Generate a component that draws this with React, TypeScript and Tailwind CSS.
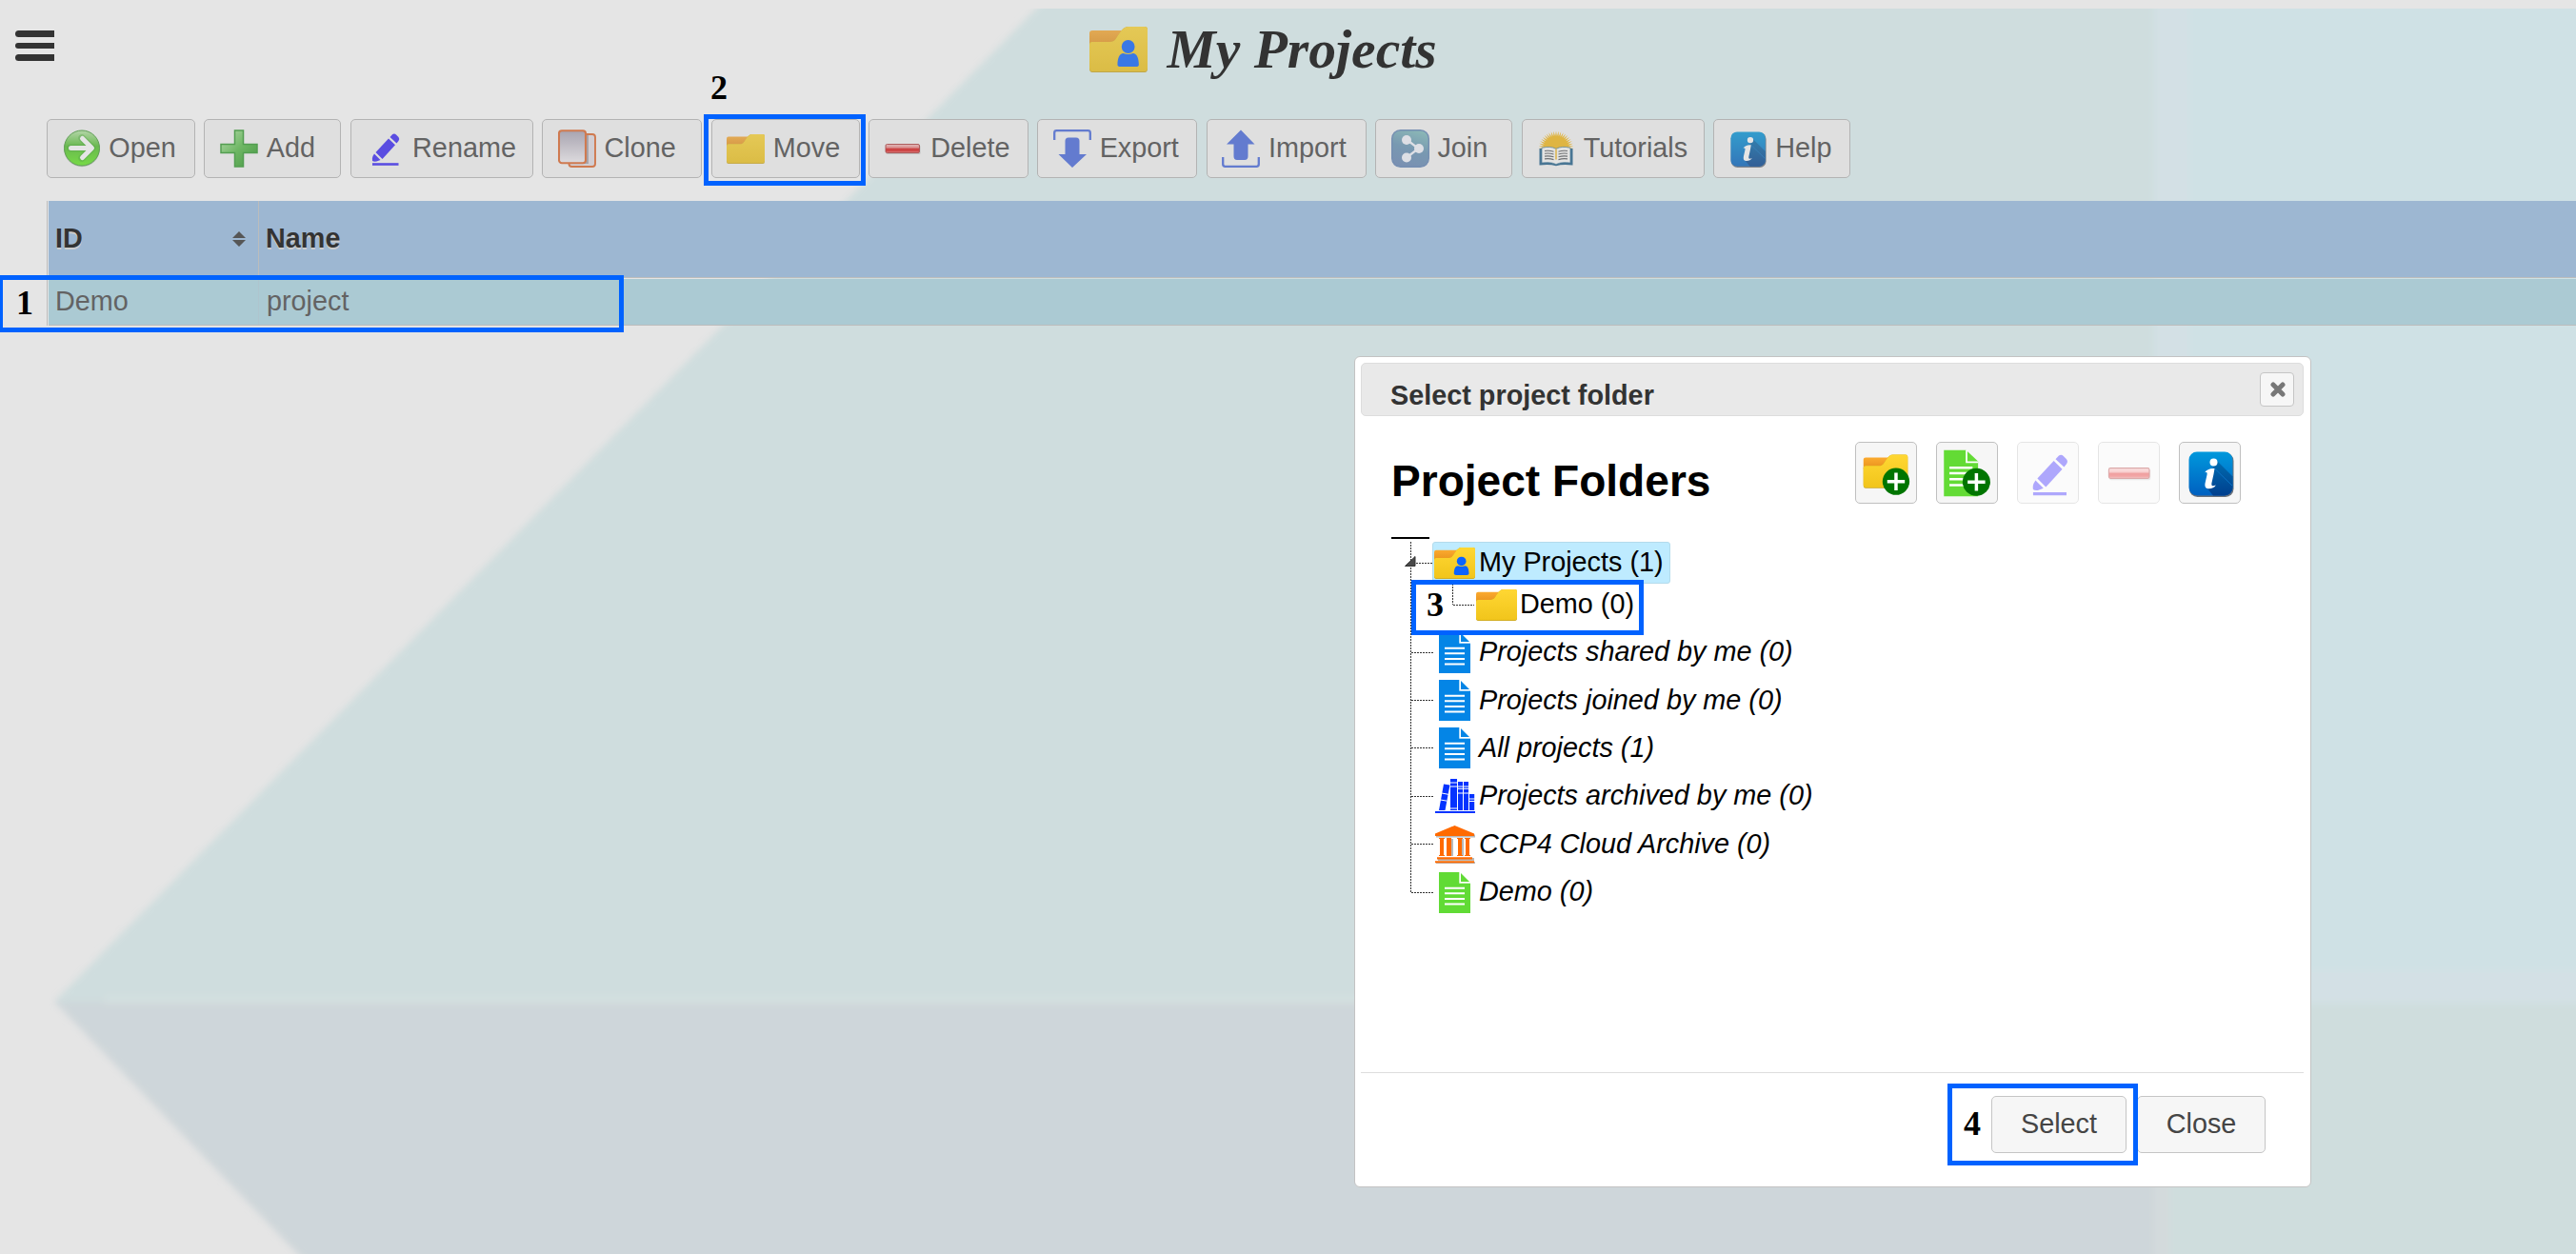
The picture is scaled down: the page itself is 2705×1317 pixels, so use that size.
import type { ReactNode } from "react";

const SANS = "font-['Liberation_Sans',Arial,sans-serif]";
const SERIF = "font-['Liberation_Serif','Times_New_Roman',serif]";

/* ---------- icons ---------- */

function FolderShape() {
  return (
    <>
      <defs>
        <linearGradient id="folderFront" x1="0" y1="0" x2="0" y2="1">
          <stop offset="0" stopColor="#ffd733" />
          <stop offset="1" stopColor="#f1c51b" />
        </linearGradient>
        <linearGradient id="folderTab" x1="0" y1="0" x2="0" y2="1">
          <stop offset="0" stopColor="#fbaa2f" />
          <stop offset="1" stopColor="#e8921c" />
        </linearGradient>
      </defs>
      <path d="M0 7a3 3 0 0 1 3-3h32v16H0z" fill="url(#folderTab)" />
      <path d="M0 19q0-3 3-3h18c6 0 7-5 10-9q4-7 9-7h17q3 0 3 3v41q0 4-3 4H3q-3 0-3-4z" fill="#c9a520" />
      <path d="M0 19q0-3 3-3h18c6 0 7-5 10-9q4-7 9-7h17q3 0 3 3v40q0 4-3 4H3q-3 0-3-4z" fill="url(#folderFront)" />
    </>
  );
}

function FolderIcon({ className }: { className: string }) {
  return (
    <svg viewBox="0 0 60 48" preserveAspectRatio="none" className={className}>
      <FolderShape />
    </svg>
  );
}

function UserFolderIcon({ className }: { className: string }) {
  return (
    <svg viewBox="0 0 60 48" preserveAspectRatio="none" className={className}>
      <FolderShape />
      <ellipse cx="40" cy="21" rx="6.8" ry="7" fill="#0b63ff" />
      <path d="M29 40c0-7 2-12 6-12q5 2 10 0c4 0 6 5 6 12q0 2-3 2H32q-3 0-3-2z" fill="#0b63ff" />
    </svg>
  );
}

function PlusBadge({ cx, cy, r }: { cx: number; cy: number; r: number }) {
  return (
    <g>
      <circle cx={cx} cy={cy} r={r} fill="#007500" />
      <path d={`M${cx - 9.5} ${cy}h19M${cx} ${cy - 9.5}v19`} stroke="#fff" strokeWidth="3.6" />
    </g>
  );
}

function NewFolderIcon() {
  return (
    <svg viewBox="0 0 65 65" className="h-[65px] w-[65px]">
      <g transform="translate(8 13) scale(.8 .755)">
        <FolderShape />
      </g>
      <PlusBadge cx={43.3} cy={42} r={14.6} />
    </svg>
  );
}

function NewListIcon() {
  return (
    <svg viewBox="0 0 65 65" className="h-[65px] w-[65px]">
      <path d="M7.5 8H31.5L44.5 20V58H7.5z" fill="#63db35" />
      <path d="M32 8v13h12.5" fill="none" stroke="#fff" strokeWidth="1.8" />
      <path d="M13.5 27h25M13.5 33h25M13.5 39.5h25M13.5 46h25" stroke="#fff" strokeWidth="2.6" />
      <PlusBadge cx={42.7} cy={42.5} r={15} />
    </svg>
  );
}

function OpenIcon() {
  return (
    <svg viewBox="0 0 40 40" className="h-10 w-10">
      <defs>
        <linearGradient id="openBall" x1="0" y1="0" x2="0" y2="1">
          <stop offset="0" stopColor="#b8e8a8" />
          <stop offset=".45" stopColor="#4fc02a" />
          <stop offset="1" stopColor="#62f01c" />
        </linearGradient>
      </defs>
      <circle cx="20" cy="20.5" r="18.8" fill="#8a9a86" opacity=".5" />
      <circle cx="20" cy="19.5" r="18.5" fill="url(#openBall)" stroke="#3f9a30" strokeWidth="1" />
      <path d="M8 19.5h22M20 9l10.5 10.5L20 30" fill="none" stroke="#2f9a22" strokeWidth="7.5" strokeLinecap="round" strokeLinejoin="round" opacity=".35" />
      <path d="M8.5 19.5H30M20.5 9.5l10 10-10 10" fill="none" stroke="#fff" strokeWidth="5" strokeLinecap="round" strokeLinejoin="round" />
    </svg>
  );
}

function AddIcon() {
  return (
    <svg viewBox="0 0 40 40" className="h-10 w-10">
      <defs>
        <linearGradient id="addPlus" x1="0" y1="0" x2="1" y2="1">
          <stop offset="0" stopColor="#bff0b0" />
          <stop offset=".5" stopColor="#55bd47" />
          <stop offset="1" stopColor="#1f8f1a" />
        </linearGradient>
      </defs>
      <path d="M15.5 1h9v14.5H39v9H24.5V39h-9V24.5H1v-9h14.5z" fill="url(#addPlus)" stroke="#2f9a2c" strokeWidth="1.5" />
    </svg>
  );
}

function PencilIcon({ className }: { className: string }) {
  return (
    <svg viewBox="0 0 40 40" className={className}>
      <g fill="#3826fa">
        <path d="M28.2 5q2.200-1 3.800.5L34.500 8q1.500 2 0 4l-2 2.500-7-6.500z" />
        <path d="M24 9.500l7 6.800L17.500 31l-7-7z" />
        <path d="M9 25.500l6.500 6.500-4 1.500q-3 .5-4.500-.5-.5-3 .5-5z" />
        <path d="M7 35.200h27.500v2.600H7z" />
      </g>
    </svg>
  );
}

function CloneIcon() {
  return (
    <svg viewBox="0 0 40 40" className="h-10 w-10">
      <defs>
        <linearGradient id="clonePage" x1="0" y1="0" x2="0" y2="1">
          <stop offset="0" stopColor="#a8a2b4" />
          <stop offset="1" stopColor="#f4f1f5" />
        </linearGradient>
      </defs>
      <rect x="11.5" y="5" width="27.5" height="34" rx="3" fill="#e4dfe6" stroke="#e0662a" strokeWidth="1.9" />
      <path d="M30 6v28H13" fill="none" stroke="#8d8892" strokeWidth="4" opacity=".7" />
      <rect x="1" y="1.2" width="28" height="34" rx="3" fill="url(#clonePage)" stroke="#e0662a" strokeWidth="2.1" />
    </svg>
  );
}

function MinusIcon({ className }: { className: string }) {
  return (
    <svg viewBox="0 0 40 40" className={className}>
      <defs>
        <linearGradient id="minusBar" x1="0" y1="0" x2="0" y2="1">
          <stop offset="0" stopColor="#f7c4c4" />
          <stop offset=".42" stopColor="#ee8080" />
          <stop offset=".5" stopColor="#d91414" />
          <stop offset=".8" stopColor="#e02020" />
          <stop offset="1" stopColor="#f08a8a" />
        </linearGradient>
      </defs>
      <rect x="2.5" y="16.5" width="36" height="9.5" rx="1.5" fill="#777" opacity=".35" />
      <rect x="2" y="15.5" width="35.5" height="9" rx="1.5" fill="url(#minusBar)" stroke="#a82a2a" strokeWidth=".9" />
    </svg>
  );
}

function ExportIcon() {
  return (
    <svg viewBox="0 0 40 40" className="h-10 w-10">
      <path d="M1.200 11V3.500q0-2.300 2.300-2.300h33q2.300 0 2.300 2.300V11" fill="none" stroke="#4568e0" strokeWidth="2.300" />
      <path d="M12.500 12q0-3.500 3.500-3.500h8q3.500 0 3.500 3.500v14H35L20 40 5.500 26h7z" fill="#4568e0" />
    </svg>
  );
}

function ImportIcon() {
  return (
    <svg viewBox="0 0 40 40" className="h-10 w-10">
      <path d="M1.200 29v7.500q0 2.300 2.300 2.300h33q2.300 0 2.300-2.300V29" fill="none" stroke="#4568e0" strokeWidth="2.300" />
      <path d="M12.500 28q0 4 3.500 4h8q3.500 0 3.500-4V15.500h7L20 .5 5 15.500h7.500z" fill="#4568e0" />
    </svg>
  );
}

function JoinIcon() {
  return (
    <svg viewBox="0 0 40 40" className="h-10 w-10">
      <defs>
        <linearGradient id="joinTile" x1=".65" y1="0" x2=".35" y2="1">
          <stop offset="0" stopColor="#7dbcbc" />
          <stop offset=".5" stopColor="#6492b5" />
          <stop offset="1" stopColor="#6686b6" />
        </linearGradient>
      </defs>
      <rect x=".7" y=".7" width="38.6" height="38.6" rx="9" fill="url(#joinTile)" stroke="#5f84b6" strokeWidth="1.4" />
      <path d="M16 10.500L28.500 20 16 29.500" fill="none" stroke="#f4f6ff" strokeWidth="2.200" />
      <circle cx="16" cy="11" r="5" fill="#f4f6ff" />
      <circle cx="29" cy="20" r="5" fill="#f4f6ff" />
      <circle cx="16" cy="29.5" r="5" fill="#f4f6ff" />
    </svg>
  );
}

const sunRays = Array.from({ length: 45 }, (_, i) => {
  const angle = Math.PI * (1 + i / 44);
  const radius = i % 2 === 0 ? 18.5 : 13;
  return `${(20 + radius * Math.cos(angle)).toFixed(2)},${(20 + radius * Math.sin(angle)).toFixed(2)}`;
}).join(" ");

function TutorialsIcon() {
  return (
    <svg viewBox="0 0 40 40" className="h-10 w-10">
      <polygon points={sunRays} fill="#f7ba18" />
      <path d="M2.500 20H5v15q9-1.500 15 1.300 6-2.800 15-1.300V20h2.500v17.500Q27 36 20 38.300 13 36 2.500 37.500z" fill="#1f5f8a" />
      <path d="M5 19.300q9-2.300 15 1 6-3.300 15-1V35q-9-1.300-15 1.500Q14 33.700 5 35z" fill="#fdfdfb" stroke="#2a6a92" strokeWidth=".7" />
      <path d="M20 20.500v11" stroke="#f0b420" strokeWidth="1.500" />
      <path
        d="M8 22.500q5-.7 9.500.7M8 25.300q5-.7 9.500.7M8 28.100q5-.7 9.500.7M8 30.900q5-.7 9.500.7M32 22.500q-5-.7-9.500.7M32 25.300q-5-.7-9.500.7M32 28.100q-5-.7-9.500.7M32 30.900q-5-.7-9.500.7"
        fill="none"
        stroke="#55585c"
        strokeWidth="1.100"
      />
    </svg>
  );
}

function InfoIcon({ className }: { className: string }) {
  return (
    <svg viewBox="0 0 48 48" className={className}>
      <defs>
        <linearGradient id="infoTile" x1="0" y1="0" x2="0" y2="1">
          <stop offset="0" stopColor="#0098dc" />
          <stop offset="1" stopColor="#0060c0" />
        </linearGradient>
        <linearGradient id="infoShade" x1="0" y1="0" x2="0" y2="1">
          <stop offset="0" stopColor="#006db0" />
          <stop offset="1" stopColor="#003f8e" />
        </linearGradient>
      </defs>
      <rect x="1" y="1.5" width="46.5" height="46.5" rx="8.5" fill="#3d4552" opacity=".75" />
      <rect x=".5" y=".5" width="46" height="46" rx="8.5" fill="url(#infoTile)" />
      <path d="M29 9l17.500 17.500V38a8.500 8.500 0 0 1-8.500 8.500H26L19 38l5-17z" fill="url(#infoShade)" />
      <path d="M27.500 18L46 36" stroke="#0b72c4" strokeWidth="1" />
      <circle cx="26.5" cy="11.5" r="4" fill="#fff" />
      <path
        d="M17 22.500c2-3.500 6-5 10.500-4.500l-1 6-2 9c-.6 3 .3 4 4.300 2.500-1.500 3-5 4-8.300 3.700-3-.4-3.500-3-2.900-6l1.900-8.500c.4-2.400-.2-3.300-2.500-2.200z"
        fill="#fff"
      />
    </svg>
  );
}

function ListIcon({ color }: { color: string }) {
  return (
    <svg viewBox="0 0 33 43" className="h-[43px] w-[33px]">
      <path d="M0 0h23l10 11v32H0z" fill={color} />
      <path d="M21.300 0H33v11.700H21.300z" fill="#fff" />
      <path d="M23 1l9 9h-9z" fill={color} />
      <path d="M6 16.800h21M6 22.200h21M6 28h21M6 33.500h21" stroke="#fff" strokeWidth="2.100" />
    </svg>
  );
}

function BooksIcon() {
  return (
    <svg viewBox="0 0 42 36" className="h-[36px] w-[42px]">
      <g fill="#0433ff">
        <path d="M0 34h42v2H0z" />
        <path d="M9 5.500l6.500 1-5 26.500H4z" />
        <path d="M16 0h7v33h-7zM24 3h5v30h-5zM30 3h5v30h-5zM36 16h5.200v17H36z" />
      </g>
      <path d="M16 4h7M16 8h7M16 31h7M24 8h11M24 10.300h11M24 15h11M36 21h6M36 23.500h6" stroke="#fff" strokeWidth="1" />
      <path d="M7 15l8 1.500M5.500 22l7 1.200" stroke="#fff" strokeWidth="1" />
    </svg>
  );
}

function BankIcon() {
  return (
    <svg viewBox="0 0 42 40" className="h-[40px] w-[42px]">
      <path d="M1 9.500h41v3H1zM15 14h4v18h-4zM27 14h3v18h-3zM3 34h38v3H3zM1 38h41v2H1z" fill="#8b8b8b" opacity=".6" />
      <path d="M20.500 0L41 8.500V11H0V8.500z" fill="#ff6a00" />
      <path d="M4 13h6v1H9v17h1v1H4v-1h1V14H4zM12 13h5v19h-5zM23 13h6v1h-1v17h1v1h-6v-1h1V14h-1zM31 13h6v1h-1v17h1v1h-6v-1h1V14h-1zM2 33.300h37v2.300H2zM0 37.200h41v2.100H0z" fill="#ff6a00" />
    </svg>
  );
}

/* ---------- page ---------- */

function Backdrop() {
  return (
    <svg viewBox="0 0 2705 1317" className="absolute inset-0 h-full w-full">
      <defs>
        <filter id="soft" x="-2%" y="-2%" width="104%" height="104%" colorInterpolationFilters="sRGB">
          <feGaussianBlur stdDeviation="3.5" />
        </filter>
        <clipPath id="belowTop">
          <path d="M0 9h2705v1308H0z" />
        </clipPath>
      </defs>
      <g clipPath="url(#belowTop)">
        <g filter="url(#soft)">
          <path d="M1107-10L57 1052H2290V-10z" fill="#e0f4f5" />
          <path d="M57 1052L330 1335H2290V1052z" fill="#dfeaef" />
          <path d="M2262-10H2740V1054H2262z" fill="#e0faff" />
          <path d="M2266 1054H2740V1340H2266z" fill="#e0f4f4" />
          <path d="M2264-10h34V1050h-34z" fill="#e6f8ff" />
          <path d="M2300 1020h440v32H2300z" fill="#e6f8ff" />
          <path d="M110 1046H2264v8H110z" fill="#e6f7f7" />
          <path d="M2262 1060h16v280h-16z" fill="#e6f0f3" />
        </g>
      </g>
    </svg>
  );
}

const tools: { label: string; width: string; icon: ReactNode }[] = [
  { label: "Open", width: "w-[156px]", icon: <OpenIcon /> },
  { label: "Add", width: "w-36", icon: <AddIcon /> },
  { label: "Rename", width: "w-48", icon: <PencilIcon className="h-10 w-10" /> },
  { label: "Clone", width: "w-[168px]", icon: <CloneIcon /> },
  { label: "Move", width: "w-[156px]", icon: <FolderIcon className="h-[31px] w-10" /> },
  { label: "Delete", width: "w-[168px]", icon: <MinusIcon className="h-10 w-10" /> },
  { label: "Export", width: "w-[168px]", icon: <ExportIcon /> },
  { label: "Import", width: "w-[168px]", icon: <ImportIcon /> },
  { label: "Join", width: "w-36", icon: <JoinIcon /> },
  { label: "Tutorials", width: "w-48", icon: <TutorialsIcon /> },
  { label: "Help", width: "w-36", icon: <InfoIcon className="mt-0.5 ml-0.5 h-[38px] w-[38px]" /> },
];

function Toolbar() {
  return (
    <nav className="ml-[49px] flex gap-[9.4px]">
      {tools.map((t) => (
        <button
          key={t.label}
          className={`flex h-[62px] shrink-0 items-center rounded-[5px] border border-[#b8b8b8] bg-[#f6f6f6] pl-[15.5px] text-[28.8px] text-[#454545] ${t.width}`}
        >
          <span className="flex h-10 w-10 shrink-0 items-center justify-center">{t.icon}</span>
          <span className="-mt-0.5 ml-[8.8px] leading-8">{t.label}</span>
        </button>
      ))}
    </nav>
  );
}

function ProjectTable() {
  return (
    <section className="mt-6 ml-[49px] border-l border-[#c5c5c5] pl-px text-[28.8px]">
      <div className="flex h-[81px] border-b border-[#c5c5c5] bg-[#99bde4] font-bold text-black [text-shadow:0_2px_0_#dcdcdc]">
        <div className="flex w-[221px] items-center justify-between border-r border-[#c5c5c5] pr-[13px] pl-[7px]">
          <span>ID</span>
          <svg viewBox="0 0 14 16" className="h-4 w-3.5">
            <path d="M7 0l7 7H0zM7 16l7-7H0z" fill="#333" />
          </svg>
        </div>
        <div className="flex items-center pl-[7px]">Name</div>
      </div>
      <div className="mt-px flex h-[49px] border-b border-[#c5c5c5] bg-[#add8e6] text-[#454545]">
        <div className="flex w-[221px] items-center border-r border-[#b0d2de] pl-[7px]">Demo</div>
        <div className="flex items-center pl-2">project</div>
      </div>
    </section>
  );
}

/* ---------- dialog ---------- */

const DOTS_H = "bg-[repeating-linear-gradient(to_right,#333_0_2px,transparent_2px_3px)]";
const DOTS_V = "bg-[repeating-linear-gradient(to_bottom,#333_0_2px,transparent_2px_3px)]";

const BLUE = "#0485e6";

const sharedLists: { label: string; icon: ReactNode }[] = [
  { label: "Projects shared by me (0)", icon: <ListIcon color={BLUE} /> },
  { label: "Projects joined by me (0)", icon: <ListIcon color={BLUE} /> },
  { label: "All projects (1)", icon: <ListIcon color={BLUE} /> },
  { label: "Projects archived by me (0)", icon: <BooksIcon /> },
  { label: "CCP4 Cloud Archive (0)", icon: <BankIcon /> },
  { label: "Demo (0)", icon: <ListIcon color="#61db35" /> },
];

function FolderTree() {
  return (
    <div className="relative mt-[35px] ml-8 text-[28.8px] leading-8 text-black">
      <div className="h-0.5 w-10 bg-black" />
      <div className={`absolute top-[5px] left-5 h-[369px] w-px ${DOTS_V}`} />
      <div className="mt-[3px] flex h-11 items-center pl-[14px]">
        <svg viewBox="0 0 12 11" className="relative -top-0.5 h-[11px] w-3">
          <path d="M11 .5v10H.5z" fill="#4a4a4a" stroke="#333" strokeWidth="1" />
        </svg>
        <div className={`h-px w-[17px] ${DOTS_H}`} />
        <div className="flex h-full w-[250px] items-center rounded-[3px] border border-[#b3dbec] bg-[#beebff] pl-px">
          <UserFolderIcon className="h-[33px] w-[43px]" />
          <span className="-mt-0.5 ml-1 whitespace-nowrap">My Projects (1)</span>
        </div>
      </div>
      <div className="flex h-11 items-center pl-16">
        <div className={`h-[22px] w-px -translate-y-1/2 ${DOTS_V}`} />
        <div className={`h-px w-[22px] ${DOTS_H}`} />
        <FolderIcon className="ml-[2px] h-[33px] w-[43px]" />
        <span className="-mt-0.5 ml-[3px]">Demo (0)</span>
      </div>
      <ul className="mt-[3px] italic">
        {sharedLists.map((item) => (
          <li key={item.label} className="flex h-[50.4px] items-center pl-[21px]">
            <div className={`h-px w-[23px] ${DOTS_H}`} />
            <span className="flex w-[45px] justify-center">{item.icon}</span>
            <span className="-mt-0.5 ml-[3px]">{item.label}</span>
          </li>
        ))}
      </ul>
    </div>
  );
}

function IconButton({ children, disabled }: { children: ReactNode; disabled?: boolean }) {
  return (
    <button
      className={`flex h-[65px] w-[65px] items-center justify-center rounded-[5px] border border-[#c0c0c0] bg-[#f6f6f6] ${disabled ? "opacity-40" : ""}`}
    >
      {children}
    </button>
  );
}

function FolderDialog() {
  return (
    <div className="absolute top-[374px] left-[1422px] flex h-[873px] w-[1005px] flex-col rounded-[6px] border border-[#c3c3c3] bg-white pt-1.5 pr-[7px] pl-[6px]">
      <header className="flex h-14 shrink-0 items-start justify-between rounded-[5px] border border-[#dddddd] bg-[#e9e9e9] pr-[9px] pl-[30px]">
        <h2 className="mt-[17px] text-[28.8px] leading-8 font-bold text-[#333333]">Select project folder</h2>
        <button className="mt-[9px] flex h-9 w-9 items-center justify-center rounded-[4px] border border-[#c5c5c5] bg-[#f6f6f6]">
          <svg viewBox="0 0 16 16" className="ml-0.5 h-4 w-4">
            <path d="M3 3l10 10M13 3L3 13" stroke="#777" strokeWidth="5" strokeLinecap="round" />
          </svg>
        </button>
      </header>
      <div className="mt-[27px] flex h-[65px] shrink-0 items-start justify-between pr-[66px] pl-8">
        <h1 className="mt-4 text-[46.08px] leading-[50px] font-bold text-black">Project Folders</h1>
        <div className="flex gap-5">
          <IconButton>
            <NewFolderIcon />
          </IconButton>
          <IconButton>
            <NewListIcon />
          </IconButton>
          <IconButton disabled>
            <PencilIcon className="mt-0.5 ml-0.5 h-[51px] w-[51px] shrink-0" />
          </IconButton>
          <IconButton disabled>
            <MinusIcon className="h-12 w-12" />
          </IconButton>
          <IconButton>
            <InfoIcon className="mt-0.5 ml-0.5 h-12 w-12" />
          </IconButton>
        </div>
      </div>
      <FolderTree />
      <footer className="mt-auto flex h-[120px] justify-end gap-[11px] border-t border-[#dddddd] pt-6 pr-10 text-[28.8px] leading-8 text-[#454545]">
        <button className="h-[60px] w-[142px] rounded-[5px] border border-[#c5c5c5] bg-[#f6f6f6] pb-0.5">Select</button>
        <button className="h-[60px] w-[135px] rounded-[5px] border border-[#c5c5c5] bg-[#f6f6f6] pb-0.5">Close</button>
      </footer>
    </div>
  );
}

/* ---------- step callouts ---------- */

const steps = [
  { n: "1", box: "top-[289px] -left-[2px] h-[60px] w-[657px]", tag: "top-[300px] left-[17px]" },
  { n: "2", box: "top-[120px] left-[739px] h-[75px] w-[170px]", tag: "top-[74px] left-[746px]" },
  { n: "3", box: "top-[609px] left-[1482px] h-[58px] w-[244px]", tag: "top-[617px] left-[1498px]" },
  { n: "4", box: "top-[1138px] left-[2045px] h-[86px] w-[200px]", tag: "top-[1162px] left-[2062px]" },
];

export default function App() {
  return (
    <main className={`relative h-[1317px] w-[2705px] overflow-hidden bg-white ${SANS}`}>
      <Backdrop />
      <div className="relative">
        <header className="flex h-[125px] items-start">
          <div className="mt-8 ml-4 flex w-[41px] flex-col gap-[6px]">
            <span className="h-[7px] rounded-l-full bg-black" />
            <span className="h-[6px] rounded-l-full bg-black" />
            <span className="h-[7px] rounded-l-full bg-black" />
          </div>
          <UserFolderIcon className="mt-7 ml-[1087px] h-12 w-[61px]" />
          <h1 className={`mt-5 ml-[20.5px] text-[57.6px] leading-[64px] font-bold text-black italic ${SERIF}`}>My Projects</h1>
        </header>
        <Toolbar />
        <ProjectTable />
      </div>
      <div className="absolute inset-0 bg-[#aaaaaa]/30" />
      <FolderDialog />
      {steps.map((s) => (
        <div key={s.n}>
          <div className={`absolute border-[5px] border-[#0062ff] ${s.box}`} />
          <span className={`absolute text-[36px] leading-9 font-bold text-black ${SERIF} ${s.tag}`}>{s.n}</span>
        </div>
      ))}
    </main>
  );
}
